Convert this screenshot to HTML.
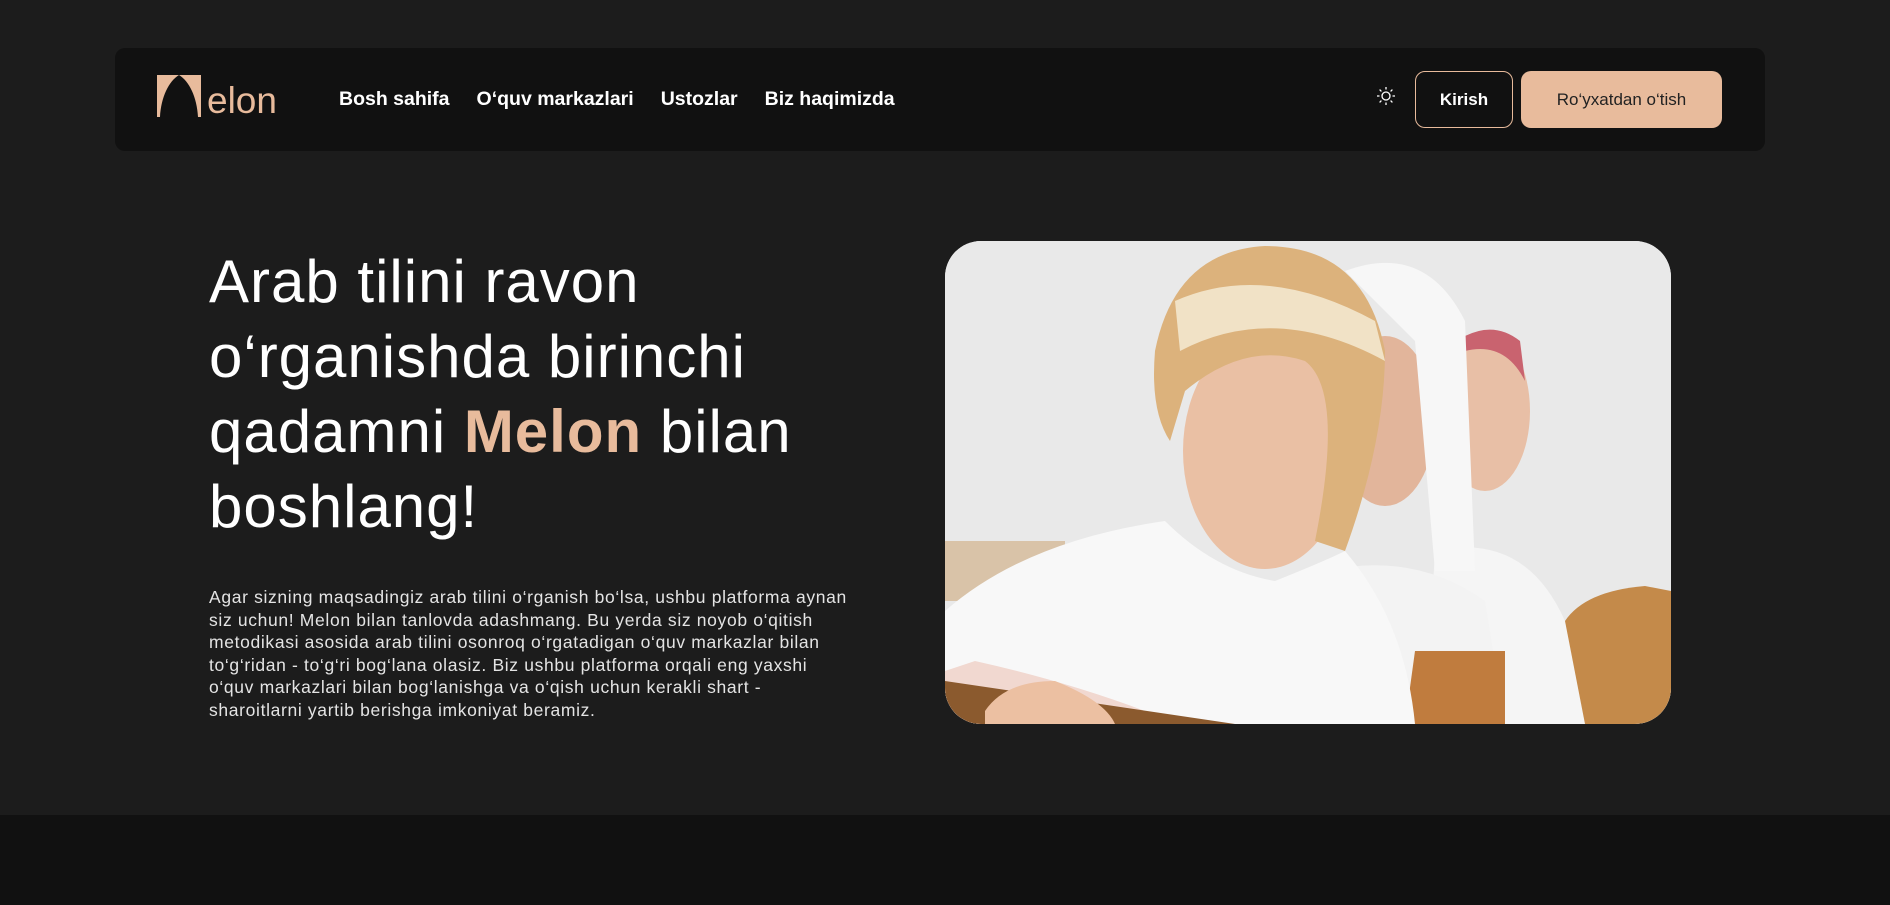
<!DOCTYPE html>
<html><head><meta charset="utf-8"><style>
*{margin:0;padding:0;box-sizing:border-box}
body{width:1890px;height:905px;background:#1c1c1c;font-family:"Liberation Sans",sans-serif;color:#fff;position:relative;overflow:hidden}
.nav{position:absolute;left:115px;top:48px;width:1650px;height:103px;background:#111;border-radius:10px}
.logo{position:absolute;left:157px;top:75px}
.elon{position:absolute;left:207px;top:80px;font-size:37px;color:#e8bb9c;font-weight:300}
.links{position:absolute;left:339px;top:88px;font-size:19.5px;font-weight:bold;display:flex;gap:27px}
.sun{position:absolute;left:1376px;top:86px}
.b1{position:absolute;left:1415px;top:71px;width:98px;height:57px;border:1px solid #e8bb9c;border-radius:10px;font-weight:bold;font-size:17px;display:flex;align-items:center;justify-content:center}
.b2{position:absolute;left:1521px;top:71px;width:201px;height:57px;background:#e8bb9c;border-radius:10px;color:#222;font-size:17px;display:flex;align-items:center;justify-content:center}
h1{position:absolute;left:209px;top:244px;font-size:60px;letter-spacing:1px;font-weight:normal;line-height:75px;width:740px}
h1 span{color:#e8bb9c;font-weight:bold}
p{position:absolute;left:209px;top:586px;width:645px;font-size:17.5px;letter-spacing:0.65px;line-height:22.5px;color:#e4e4e4}
.img{position:absolute;left:945px;top:241px;width:726px;height:483px;border-radius:36px;overflow:hidden;background:#e6e6e6}
.foot{position:absolute;left:0;top:815px;width:1890px;height:90px;background:#111}
</style></head><body>
<div class="nav"></div>
<svg class="logo" width="44" height="42" viewBox="0 0 44 42"><path d="M0 0H44V42H41C40 22 32 6 22 0C12 6 4 22 3 42H0Z" fill="#e8bb9c"/></svg>
<div class="elon">elon</div>
<div class="links"><span>Bosh sahifa</span><span>O‘quv markazlari</span><span>Ustozlar</span><span>Biz haqimizda</span></div>
<svg class="sun" width="20" height="20" viewBox="0 0 20 20" stroke="#fff" stroke-width="1.3" fill="none"><circle cx="10" cy="10" r="4"/><path d="M10 1v2.5M10 16.5V19M1 10h2.5M16.5 10H19M3.6 3.6l1.8 1.8M14.6 14.6l1.8 1.8M3.6 16.4l1.8-1.8M14.6 5.4l1.8-1.8"/></svg>
<div class="b1">Kirish</div>
<div class="b2">Ro‘yxatdan o‘tish</div>
<h1>Arab tilini ravon o‘rganishda birinchi qadamni <span>Melon</span> bilan boshlang!</h1>
<p>Agar sizning maqsadingiz arab tilini o‘rganish bo‘lsa, ushbu platforma aynan siz uchun! Melon bilan tanlovda adashmang. Bu yerda siz noyob o‘qitish metodikasi asosida arab tilini osonroq o‘rgatadigan o‘quv markazlar bilan to‘g‘ridan - to‘g‘ri bog‘lana olasiz. Biz ushbu platforma orqali eng yaxshi o‘quv markazlari bilan bog‘lanishga va o‘qish uchun kerakli shart - sharoitlarni yartib berishga imkoniyat beramiz.</p>
<div class="img"><svg width="726" height="483" viewBox="0 0 726 483">
<rect width="726" height="483" fill="#e9e9e9"/>
<rect x="0" y="300" width="120" height="60" fill="#d9c3a8"/>
<path d="M600 500L620 380Q640 350 700 345L726 350V483Z" fill="#c48a4a"/>
<ellipse cx="540" cy="170" rx="45" ry="80" fill="#e8bfa6"/>
<path d="M520 110Q560 100 580 140L575 100Q550 80 520 95Z" fill="#c9636f"/>
<path d="M490 310Q580 290 620 380L640 483H480Z" fill="#f5f5f5"/>
<ellipse cx="440" cy="180" rx="50" ry="85" fill="#e2b59b"/>
<path d="M400 30Q480 0 520 80L530 330L490 330L470 100Z" fill="#f7f7f7"/>
<path d="M380 330Q470 310 540 360L560 483H380Z" fill="#f3f3f3"/>
<path d="M470 410H560V483H460Z" fill="#c07c3e"/>
<ellipse cx="320" cy="210" rx="82" ry="118" fill="#eac0a4"/>
<path d="M210 110Q230 10 320 5Q420 5 440 110Q440 200 400 310L370 300Q400 150 360 120Q300 100 240 150L225 200Q205 170 210 110Z" fill="#dcb27c"/>
<path d="M230 60Q320 20 430 80L440 120Q330 60 235 110Z" fill="#f1e2c6"/>
<path d="M0 370Q80 300 220 280Q270 330 330 340Q380 320 400 310Q460 380 470 483H0Z" fill="#f8f8f8"/>
<path d="M0 430L30 420Q120 440 200 470L230 483H0Z" fill="#f1d8d0"/>
<path d="M0 440L290 483H0Z" fill="#8b5a2e"/>
<path d="M40 470Q60 440 110 440Q160 460 170 483H40Z" fill="#ecc0a2"/>
</svg></div>
<div class="foot"></div>
</body></html>
